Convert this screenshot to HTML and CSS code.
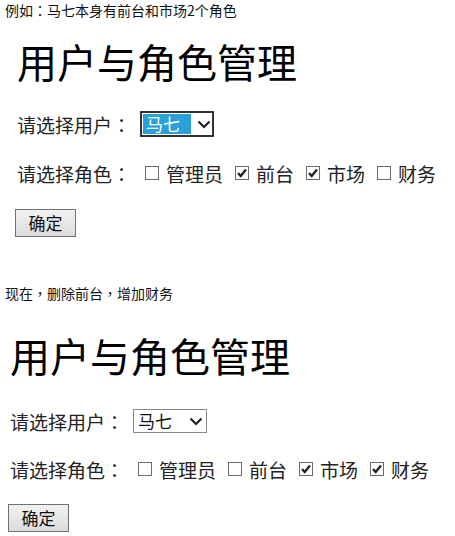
FILE: index.html
```html
<!DOCTYPE html>
<html lang="zh-CN">
<head>
<meta charset="utf-8">
<title>用户与角色管理</title>
<link rel="stylesheet" href="styles.css">
</head>
<body>
<p class="caption caption-first">例如<span class="punct" lang="zh-TW">：</span>马七本身有前台和市场2个角色</p>
<section class="shot shot-first">
  <h1 class="title">用户与角色管理</h1>
  <div class="row row-user">
    <span class="label">请选择用户<span class="punct" lang="zh-TW">：</span></span>
    <span class="select select-focused">
      <span class="select-value">马七</span>
      <svg class="chevron" width="14" height="9" viewBox="0 0 14 9"><path d="M1.5 1.5 L7 7 L12.5 1.5" fill="none" stroke="#222" stroke-width="2.2"/></svg>
    </span>
  </div>
  <div class="row row-role">
    <span class="label">请选择角色<span class="punct" lang="zh-TW">：</span></span>
    <span class="check"></span><span class="opt">管理员</span>
    <span class="check checked"><svg width="12" height="12" viewBox="0 0 12 12"><path d="M2 6.2 L4.7 9 L10 2.6" fill="none" stroke="#222" stroke-width="2.4"/></svg></span><span class="opt">前台</span>
    <span class="check checked"><svg width="12" height="12" viewBox="0 0 12 12"><path d="M2 6.2 L4.7 9 L10 2.6" fill="none" stroke="#222" stroke-width="2.4"/></svg></span><span class="opt">市场</span>
    <span class="check"></span><span class="opt">财务</span>
  </div>
  <button class="btn" type="button">确定</button>
</section>

<p class="caption caption-second">现在<span class="punct" lang="zh-TW">，</span>删除前台<span class="punct" lang="zh-TW">，</span>增加财务</p>
<section class="shot shot-second">
  <h1 class="title">用户与角色管理</h1>
  <div class="row row-user">
    <span class="label">请选择用户<span class="punct" lang="zh-TW">：</span></span>
    <span class="select">
      <span class="select-value">马七</span>
      <svg class="chevron" width="14" height="9" viewBox="0 0 14 9"><path d="M1.5 1.5 L7 7 L12.5 1.5" fill="none" stroke="#222" stroke-width="2.2"/></svg>
    </span>
  </div>
  <div class="row row-role">
    <span class="label">请选择角色<span class="punct" lang="zh-TW">：</span></span>
    <span class="check"></span><span class="opt">管理员</span>
    <span class="check"></span><span class="opt">前台</span>
    <span class="check checked"><svg width="12" height="12" viewBox="0 0 12 12"><path d="M2 6.2 L4.7 9 L10 2.6" fill="none" stroke="#222" stroke-width="2.4"/></svg></span><span class="opt">市场</span>
    <span class="check checked"><svg width="12" height="12" viewBox="0 0 12 12"><path d="M2 6.2 L4.7 9 L10 2.6" fill="none" stroke="#222" stroke-width="2.4"/></svg></span><span class="opt">财务</span>
  </div>
  <button class="btn" type="button">确定</button>
</section>
</body>
</html>
```
FILE: styles.css
```css
html, body {
  margin: 0;
  padding: 0;
  background: #fff;
  color: #000;
}
body {
  font-family: "Noto Sans CJK SC", "Noto Sans", sans-serif;
  width: 455px;
  height: 536px;
  overflow: hidden;
}
.punct {
  font-family: "Noto Sans CJK TC", "Noto Sans CJK SC", sans-serif;
}
.caption {
  margin: 0;
  padding-left: 5px;
  font-size: 14px;
  line-height: 18px;
  color: #111;
}
.caption-first { margin-top: 1px; }
.caption-second { margin-top: 47px; }

.shot-first { padding-left: 17px; }
.shot-second { padding-left: 10px; }

.title {
  margin: 0;
  font-size: 40px;
  font-weight: 400;
  line-height: 48px;
  letter-spacing: 0;
}
.shot-first .title { margin-top: 18px; }
.shot-second .title { margin-top: 29px; }

.row {
  display: flex;
  align-items: center;
  height: 30px;
  font-size: 19px;
  color: #222;
}
.shot-first .row-user { margin-top: 24px; }
.shot-first .row-role { margin-top: 19px; }
.shot-second .row-user { margin-top: 27px; }
.shot-second .row-role { margin-top: 18px; }

.label { margin-right: 9px; }
.row-role .label { margin-right: 14px; }

.select {
  display: inline-flex;
  align-items: center;
  box-sizing: border-box;
  width: 74px;
  height: 24px;
  border: 1px solid #8a8a8a;
  padding: 1px;
  font-size: 17px;
  color: #111;
}
.select-focused {
  height: 26px;
  border: 2px solid #333;
  width: 74px;
  padding: 1px;
}
.select-value {
  display: inline-block;
  width: 48px;
  height: 100%;
  line-height: 20px;
  padding-left: 3px;
  box-sizing: border-box;
}
.select-focused .select-value {
  background: #2a9fd8;
  color: #fff;
}
.chevron {
  margin-left: 6px;
}

.check {
  display: inline-flex;
  align-items: center;
  justify-content: center;
  box-sizing: border-box;
  width: 14px;
  height: 14px;
  border: 1px solid #6a6a6a;
  background: #fff;
  margin-right: 7px;
}
.opt { margin-right: 12px; }

.btn {
  display: block;
  box-sizing: border-box;
  width: 61px;
  height: 28px;
  padding: 0;
  border: 1px solid #707070;
  border-radius: 0;
  background: linear-gradient(#f2f2f2, #dcdcdc);
  font-family: "Noto Sans CJK SC", "Noto Sans", sans-serif;
  font-size: 17px;
  line-height: 24px;
  color: #111;
}
.shot-first .btn { margin-top: 21px; margin-left: -2px; }
.shot-second .btn { margin-top: 20px; margin-left: -2px; }
```
